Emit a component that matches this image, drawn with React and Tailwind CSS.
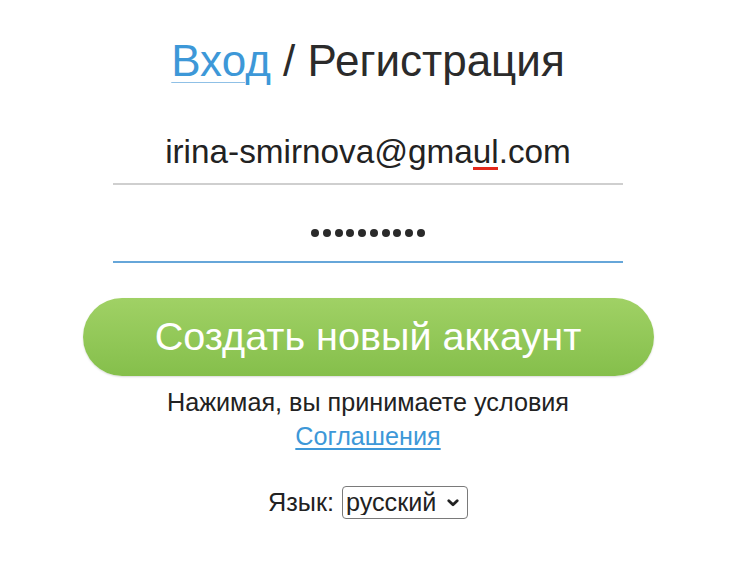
import React from "react";

const FONT = { fontFamily: '"Liberation Sans", Arial, sans-serif' };

function Chevron() {
  return (
    <svg width="12" height="8" viewBox="0 0 12 8" className="pointer-events-none absolute right-[9px] top-[13px]">
      <path d="M1.8 1.8 L6 5.8 L10.2 1.8" fill="none" stroke="#222" strokeWidth="2.8" strokeLinecap="round" strokeLinejoin="round" />
    </svg>
  );
}

export default function App() {
  const [lang, setLang] = React.useState("ru");

  return (
    <div style={FONT} className="min-h-[567px] w-[736px] bg-white flex flex-col items-center text-[#222]">
      <h1 className="mt-[39px] text-[44px] leading-none font-normal text-[#2b2b2b]">
        <a href="#" className="text-[#3d98d8] underline decoration-[#8fc0e6] decoration-1 underline-offset-[6px]">
          Вход
        </a>{" "}
        / Регистрация
      </h1>

      {/* email */}
      <div className="mt-[52px] w-[510px] border-b-2 border-[#cfcfcf] pb-[13px] text-center">
        <span className="relative text-[33.3px] leading-none text-[#222]">
          irina-smirnova@gma
          <span className="relative">
            ul
            <span className="absolute left-[0px] right-[1px] top-[34px] h-[3px] bg-[#e3281b]" />
          </span>
          .com
        </span>
      </div>

      {/* password */}
      <div className="w-[510px] border-b-2 border-[#66a6d9] pt-[44px] pb-[24px] flex justify-center gap-[3.8px]">
        {Array.from({ length: 10 }).map((_, i) => (
          <span key={i} className="w-2 h-2 rounded-full bg-[#2a2a2a]" />
        ))}
      </div>

      <button className="mt-[35px] w-[571px] h-[78px] rounded-full bg-gradient-to-b from-[#a0d165] to-[#85bf4b] text-white text-[39.6px] leading-none shadow-[0_1px_2px_rgba(0,0,0,0.15)]">
        Создать новый аккаунт
      </button>

      <div className="mt-[9px] text-center text-[25.2px] leading-[34px] text-[#222]">
        <div>Нажимая, вы принимаете условия</div>
        <a href="#" className="text-[#3d98d8] underline underline-offset-[3px]">
          Соглашения
        </a>
      </div>

      <div className="mt-[33px] flex items-center gap-[8px] text-[25.2px] leading-none">
        <span>Язык:</span>
        <div className="relative">
          <select
            value={lang}
            onChange={(e) => setLang(e.target.value)}
            className="appearance-none h-[33px] w-[126px] rounded-[4px] border border-[#7a7a7a] bg-white pl-[3px] pr-[24px] text-[25.2px] leading-none text-[#222]"
          >
            <option value="ru">русский</option>
            <option value="en">English</option>
          </select>
          <Chevron />
        </div>
      </div>
    </div>
  );
}
